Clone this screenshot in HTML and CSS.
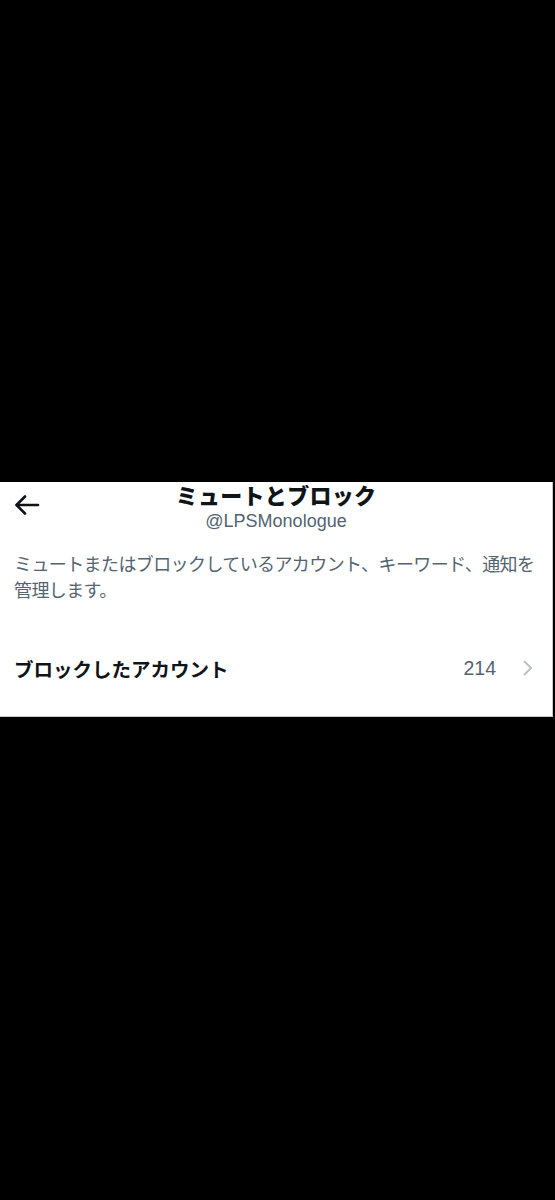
FILE: index.html
```html
<!DOCTYPE html>
<html lang="ja">
<head>
<meta charset="utf-8">
<link rel="stylesheet" href="styles.css">
</head>
<body>
<main class="panel">
  <header class="header">
    <button class="back" aria-label="戻る">
      <svg width="26" height="22" viewBox="0 0 26 22" fill="none" stroke="#0f1419" stroke-width="2.6" stroke-linecap="round" stroke-linejoin="round">
        <path d="M24 11H3"/>
        <path d="M11 2.5L2.5 11l8.5 8.5"/>
      </svg>
    </button>
    <h1 class="title">ミュートとブロック</h1>
    <p class="handle">@LPSMonologue</p>
  </header>
  <p class="desc">ミュートまたはブロックしているアカウント、キーワード、通知を<br>管理します。</p>
  <div class="row">
    <span class="row-label">ブロックしたアカウント</span>
    <span class="row-count">214</span>
    <svg class="chev" width="12" height="18" viewBox="0 0 12 18" fill="none" stroke="#b9c0c6" stroke-width="2" stroke-linecap="round" stroke-linejoin="round">
      <path d="M2.5 2.5L9 9l-6.5 6.5"/>
    </svg>
  </div>
</main>
</body>
</html>
```

FILE: styles.css
```css
html, body {
  margin: 0;
  padding: 0;
  background: #000;
}
body {
  padding-top: 482px;
  font-family: "Liberation Sans", "Noto Sans CJK JP", sans-serif;
}
.panel {
  width: 552px;
  height: 234px;
  background: #fff;
  border-right: 1px solid #c8c8c8;
  border-bottom: 1px solid #c8c8c8;
  display: flex;
  flex-direction: column;
}
.header {
  position: relative;
  display: flex;
  flex-direction: column;
  align-items: center;
  height: 58px;
}
.back {
  position: absolute;
  left: 14px;
  top: 12px;
  padding: 0;
  border: 0;
  background: none;
  display: flex;
}
.title {
  margin: 0;
  font-family: "Noto Sans CJK JP", sans-serif;
  font-size: 22px;
  line-height: 24px;
  font-weight: 900;
  color: #0f1419;
  letter-spacing: 0.3px;
}
.handle {
  margin: 5px 0 0;
  font-size: 18px;
  line-height: 20px;
  color: #536471;
}
.desc {
  margin: 10px 0 0;
  padding: 0 4px 0 14px;
  font-family: "Noto Sans CJK JP", sans-serif;
  font-size: 18px;
  line-height: 26px;
  color: #536471;
  letter-spacing: -0.6px;
  white-space: nowrap;
}
.row {
  margin-top: 38px;
  height: 56px;
  display: flex;
  align-items: center;
  padding: 0 18px 0 14px;
}
.row-label {
  flex: 1;
  font-family: "Noto Sans CJK JP", sans-serif;
  font-size: 19.5px;
  font-weight: 700;
  color: #0f1419;
}
.row-count {
  font-size: 19.5px;
  color: #536471;
  margin-right: 26px;
}
.chev {
  display: block;
}
```
